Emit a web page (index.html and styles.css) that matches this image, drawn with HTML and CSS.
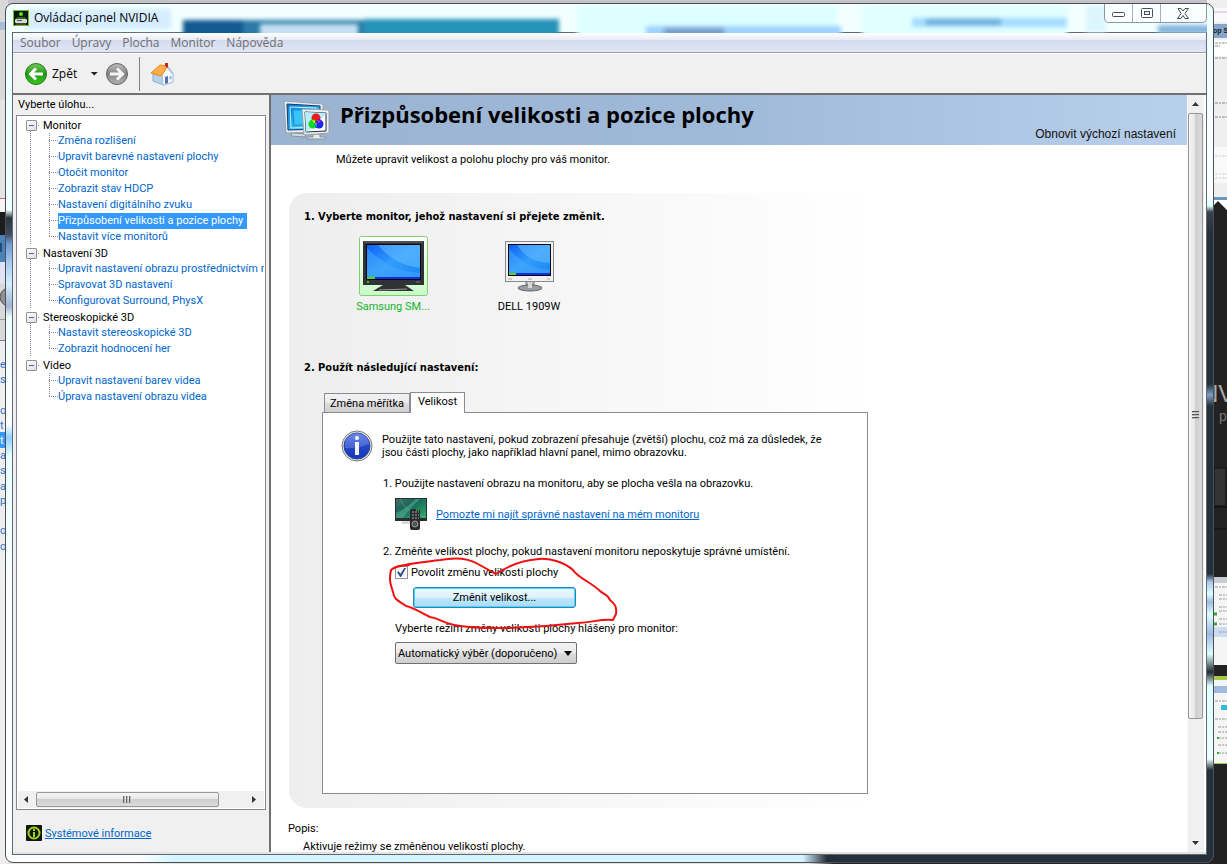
FILE: index.html
```html
<!DOCTYPE html>
<html lang="cs">
<head>
    <meta charset="UTF-8">
    <meta name="viewport" content="width=device-width, initial-scale=1.0">
    <title>Ovládací panel NVIDIA</title>
    <link rel="stylesheet" href="styles.css">
</head>
<body>
    <!-- windows behind -->
    <svg class="backdrop backdrop-left" width="8" height="864" aria-hidden="true">
        <rect width="8" height="864" fill="#d9d9d9"/>
        <rect y="22" width="8" height="8" fill="#a9bdd4"/>
        <rect y="100" width="8" height="98" fill="#e4e4e4"/>
        <rect y="198" width="8" height="1" fill="#d06a6a"/>
        <rect y="199" width="8" height="13" fill="#f4f4f4"/>
        <rect y="212" width="8" height="23" fill="#1c1c1c"/>
        <rect y="235" width="8" height="27" fill="#4a82b8"/>
        <rect y="243" width="2" height="9" fill="#1f4d80"/>
        <rect y="262" width="8" height="22" fill="#e0e4f2"/>
        <circle cx="9" cy="297" r="9" fill="#909090" stroke="#555"/>
        <rect y="319" width="8" height="1" fill="#999"/>
        <rect y="340" width="8" height="1" fill="#777f8a"/>
        <rect y="341" width="8" height="523" fill="#eeeeee"/>
        <rect y="432" width="8" height="16" fill="#3399ff"/>
        <g class="clipped">
            <text x="0" y="368">e</text>
            <text x="0" y="383">s</text>
            <text x="0" y="414">o</text>
            <text x="0" y="429">t</text>
            <text x="0" y="444" class="on">t</text>
            <text x="0" y="459">a</text>
            <text x="0" y="474">s</text>
            <text x="0" y="490">al</text>
            <text x="0" y="504">p</text>
            <text x="0" y="534">o</text>
            <text x="0" y="550">o</text>
        </g>
    </svg>
    <svg class="backdrop backdrop-right" width="20" height="864" aria-hidden="true">
        <rect width="20" height="864" fill="#222"/>
        <rect width="20" height="198" fill="#efefef"/>
        <rect y="8" width="20" height="14" fill="#fafafa"/>
        <rect y="11" width="20" height="2" fill="#e3d8ea"/>
        <rect y="24" width="20" height="14" fill="#86a5c8"/>
        <text x="6" y="33" class="behind-bold">op S</text>
        <rect y="40" width="20" height="16" fill="#fff"/>
        <path d="M8 43h12M8 46h5M8 58h12M8 103h12M8 117h12M8 156h12M8 174h12M8 178h12" stroke="#888" stroke-dasharray="3 1 2 1"/>
        <rect y="147" width="20" height="36" fill="#fff" opacity=".6"/>
        <rect y="197" width="20" height="3" fill="#6a98b8"/>
        <path d="M7 200h13v10l-9-9-4 4z" fill="#fff"/>
        <text x="-6" y="402" class="behind-logo">NV</text>
        <text x="12" y="421" class="behind-sub">p</text>
        <rect x="7" y="468" width="12" height="38" fill="#333" stroke="#111"/>
        <path d="M7 507h13M7 529h13" stroke="#0c0c0c"/>
        <rect y="577" width="20" height="88" fill="#f5f5f5"/>
        <rect y="577" width="20" height="6" fill="#c9ccd2"/>
        <rect y="627" width="20" height="10" fill="#cbdcf2"/>
        <path d="M8 587h12M12 595h8M12 599h8M12 607h8M12 611h8M12 619h8M12 624h8M12 632h8" stroke="#999" stroke-dasharray="3 1 2 1"/>
        <path d="M7 614h3M7 624h3" stroke="#3a3" stroke-width="3"/>
        <rect y="676" width="20" height="88" fill="#f5f5f5"/>
        <rect y="676" width="20" height="4" fill="#a6c84a"/>
        <rect y="686" width="20" height="7" fill="#9dbbe0"/>
        <path d="M14 705h6v5h-6z" fill="#34b8dc"/>
        <path d="M8 701h12M8 719h12M11 727h9M11 732h9M11 738h9M11 745h9M11 753h9" stroke="#999" stroke-dasharray="3 1 2 1"/>
        <path d="M10 738h2M10 753h2" stroke="#3a3" stroke-width="2"/>
        <rect y="763" width="20" height="1" fill="#a6c84a"/>
    </svg>

    <div class="window">
        <header class="title-bar">
            <svg class="glass" width="1200" height="29" aria-hidden="true">
                <g class="blurred">
                    <rect x="14" y="5" width="145" height="20" fill="#d6edff"/>
                    <rect x="171" y="16" width="190" height="22" fill="#2b7ba6"/>
                    <rect x="171" y="16" width="60" height="22" fill="#135a91"/>
                    <rect x="248" y="20" width="98" height="18" fill="#c5e0f3"/>
                    <rect x="352" y="15" width="195" height="23" fill="#2693ba"/>
                    <rect x="565" y="2" width="260" height="40" fill="#ddffff"/>
                    <rect x="634" y="22" width="195" height="20" fill="#9ed3ff"/>
                    <rect x="652" y="24" width="60" height="10" fill="#789fc8"/>
                    <rect x="850" y="2" width="205" height="40" fill="#e0ffff"/>
                    <rect x="900" y="14" width="155" height="9" fill="#a5dcff"/>
                    <rect x="914" y="15" width="75" height="6" fill="#6faddb"/>
                    <rect x="1074" y="2" width="20" height="26" fill="#dcf6ff"/>
                    <rect x="1146" y="21" width="60" height="9" fill="#86b5dc"/>
                </g>
            </svg>
            <svg class="app-icon" width="16" height="16" viewBox="0 0 16 16" aria-hidden="true">
                <rect x=".5" y=".5" width="15" height="15" fill="#101510" stroke="#6cc21a"/>
                <circle cx="8" cy="4" r="2" fill="#5be02a"/>
                <path d="M4 7h8l1 2H3z" fill="#276a17"/>
                <rect x="2" y="9" width="12" height="4" rx="1" fill="#d6d9d4"/>
                <path d="M4 10h5v1H4z" fill="#555"/>
                <path d="M3 14h10" stroke="#777"/>
            </svg>
            <span class="app-title">Ovládací panel NVIDIA</span>
            <div class="caption-buttons">
                <button type="button" aria-label="Minimalizovat">
                    <svg width="13" height="7" viewBox="0 0 13 7"><rect x=".5" y="2.500" width="12" height="4" rx="1" fill="#fff" stroke="#474c5e"/></svg>
                </button>
                <button type="button" aria-label="Maximalizovat">
                    <svg width="12" height="10" viewBox="0 0 12 10"><rect x=".5" y=".5" width="11" height="9" rx="1" fill="#fff" stroke="#474c5e"/><rect x="3.500" y="3.500" width="5" height="3" fill="#dff4ff" stroke="#474c5e"/></svg>
                </button>
                <button type="button" class="close" aria-label="Zavřít">
                    <svg width="13" height="11" viewBox="0 0 13 11"><path d="M1 .5h3l2 2.500 2-2.500h3.500L8 5.500l3.500 5H8l-2-3-2 3H.5L4 5.500z" fill="#fff" stroke="#474c5e"/></svg>
                </button>
            </div>
        </header>

        <div class="client">
            <nav class="menu">
                <a href="#">Soubor</a>
                <a href="#">Úpravy</a>
                <a href="#">Plocha</a>
                <a href="#">Monitor</a>
                <a href="#">Nápověda</a>
            </nav>

            <div class="toolbar">
                <button type="button" class="back">
                    <svg width="24" height="24" viewBox="0 0 24 24" aria-hidden="true">
                        <defs>
                            <linearGradient id="green" x1="0" y1="0" x2="0" y2="1"><stop offset="0" stop-color="#7cc862"/><stop offset=".5" stop-color="#1f9a14"/><stop offset="1" stop-color="#3cc81e"/></linearGradient>
                            <linearGradient id="grey" x1="0" y1="0" x2="0" y2="1"><stop offset="0" stop-color="#bdbdbd"/><stop offset=".5" stop-color="#858585"/><stop offset="1" stop-color="#b4b4b4"/></linearGradient>
                        </defs>
                        <circle cx="12" cy="12" r="10.500" fill="url(#green)" stroke="#167a10"/>
                        <path d="M19 12H7M12 6.500L6.500 12l5.500 5.500" fill="none" stroke="#fff" stroke-width="3"/>
                    </svg>
                    Zpět
                </button>
                <button type="button" class="history" aria-label="Historie"></button>
                <button type="button" aria-label="Vpřed">
                    <svg width="24" height="24" viewBox="0 0 24 24" aria-hidden="true">
                        <circle cx="12" cy="12" r="10.500" fill="url(#grey)" stroke="#606060"/>
                        <path d="M5 12h12M12 6.500l5.500 5.500-5.500 5.500" fill="none" stroke="#f4f4f4" stroke-width="3"/>
                    </svg>
                </button>
                <span class="separator"></span>
                <button type="button" aria-label="Domů">
                    <svg width="24" height="24" viewBox="0 0 24 24" aria-hidden="true">
                        <path d="M3 11l7-4 4 7v9L3 19z" fill="#b4d3f0" stroke="#88acd0"/>
                        <path d="M12 13l5-8 6 7v8l-10 3.500z" fill="#f3f8fd" stroke="#9cbcdc"/>
                        <path d="M15 22v-7l3-1v7z" fill="#5b6fa5"/>
                        <path d="M19.500 14.500l2-.5v3l-2 .5z" fill="#7fb5e8"/>
                        <path d="M1 11l9-8 8 1-7 10z" fill="#ffad48" stroke="#e88a20"/>
                        <path d="M17 4l6 8" stroke="#a9c7e2" stroke-width="2"/>
                        <path d="M15 1h3v5l-3-2z" fill="#c3231c"/>
                    </svg>
                </button>
            </div>

            <div class="content">
                <aside class="sidebar">
                    <h2>Vyberte úlohu...</h2>
                    <div class="tree-box">
                        <ul class="tree">
                            <li><span class="group">Monitor</span>
                                <ul>
                                    <li><a href="#">Změna rozlišení</a></li>
                                    <li><a href="#">Upravit barevné nastavení plochy</a></li>
                                    <li><a href="#">Otočit monitor</a></li>
                                    <li><a href="#">Zobrazit stav HDCP</a></li>
                                    <li><a href="#">Nastavení digitálního zvuku</a></li>
                                    <li><a href="#" class="selected">Přizpůsobení velikosti a pozice plochy</a></li>
                                    <li><a href="#">Nastavit více monitorů</a></li>
                                </ul>
                            </li>
                            <li><span class="group">Nastavení 3D</span>
                                <ul>
                                    <li><a href="#">Upravit nastavení obrazu prostřednictvím n</a></li>
                                    <li><a href="#">Spravovat 3D nastavení</a></li>
                                    <li><a href="#">Konfigurovat Surround, PhysX</a></li>
                                </ul>
                            </li>
                            <li><span class="group">Stereoskopické 3D</span>
                                <ul>
                                    <li><a href="#">Nastavit stereoskopické 3D</a></li>
                                    <li><a href="#">Zobrazit hodnocení her</a></li>
                                </ul>
                            </li>
                            <li><span class="group">Video</span>
                                <ul>
                                    <li><a href="#">Upravit nastavení barev videa</a></li>
                                    <li><a href="#">Úprava nastavení obrazu videa</a></li>
                                </ul>
                            </li>
                        </ul>
                        <div class="scroll-x" aria-hidden="true">
                            <i class="arrow left"></i>
                            <div class="track"><div class="thumb"><i class="grip"></i></div></div>
                            <i class="arrow right"></i>
                        </div>
                    </div>
                    <div class="system-info">
                        <svg width="16" height="16" viewBox="0 0 16 16" aria-hidden="true">
                            <rect width="16" height="16" rx="1" fill="#12160c"/>
                            <circle cx="8" cy="8" r="5.500" fill="none" stroke="#9bd51f" stroke-width="2"/>
                            <path d="M8 4v2M8 7v5" stroke="#9bd51f" stroke-width="2"/>
                        </svg>
                        <a href="#">Systémové informace</a>
                    </div>
                </aside>

                <main class="page">
                    <div class="page-header">
                        <svg width="48" height="40" viewBox="0 0 48 40" aria-hidden="true">
                            <defs>
                                <linearGradient id="cyan" x1="0" y1="0" x2="1" y2="1"><stop offset="0" stop-color="#0a74d8"/><stop offset="1" stop-color="#5fe6ff"/></linearGradient>
                            </defs>
                            <path d="M9 33l13 1 1 3-15-1z" fill="#d5d9dc" stroke="#8b949c"/>
                            <path d="M1 1l39 3v28L3 33z" fill="#e9edf0" stroke="#98a4af"/>
                            <path d="M4 4l33 2v23L5 30z" fill="url(#cyan)" stroke="#0b3d72"/>
                            <path d="M7 7l26 1v19L8 28z" fill="none" stroke="#b7f3ff"/>
                            <path d="M10 10h18v15H11z" fill="#39c5f4" stroke="#0d96d8"/>
                            <path d="M30 34h7v3h5l1 2H24l1-2h5z" fill="#e6e8ea" stroke="#8b949c"/>
                            <path d="M19 9l27 1v23l-25 2z" fill="#eef1f3" stroke="#98a4af"/>
                            <path d="M22 12l21 1v18l-20 1z" fill="#fff" stroke="#222f3b"/>
                            <path d="M22 12l21 1-2 3-14 14-4 2z" fill="#b5efff"/>
                            <circle cx="33" cy="18" r="4.500" fill="#f01818"/>
                            <circle cx="30" cy="24" r="4.500" fill="#12dc22"/>
                            <circle cx="36" cy="24" r="4.500" fill="#1828ee"/>
                            <path d="M29 20l4 1 1 3-3-1z" fill="#ffe818"/>
                            <path d="M34 20l4 1-3 2z" fill="#ea20dc"/>
                            <path d="M33 23l1 4-2-2z" fill="#18e2e8"/>
                            <circle cx="33" cy="22" r="1" fill="#333"/>
                        </svg>
                        <h1>Přizpůsobení velikosti a pozice plochy</h1>
                        <a href="#">Obnovit výchozí nastavení</a>
                    </div>
                    <p class="intro">Můžete upravit velikost a polohu plochy pro váš monitor.</p>

                    <section class="panel">
                        <h2>1. Vyberte monitor, jehož nastavení si přejete změnit.</h2>
                        <div class="monitors">
                            <button type="button" class="monitor active">
                                <svg width="69" height="60" viewBox="0 0 69 60" aria-hidden="true">
                                    <defs>
                                        <linearGradient id="screen" x1="0" y1="0" x2="1" y2="1"><stop offset="0" stop-color="#0d62f5"/><stop offset=".5" stop-color="#319dfc"/><stop offset="1" stop-color="#1c86f4"/></linearGradient>
                                        <linearGradient id="mint" x1="0" y1="0" x2="0" y2="1"><stop offset="0" stop-color="#fff"/><stop offset="1" stop-color="#c9fbc9"/></linearGradient>
                                    </defs>
                                    <rect x=".5" y=".5" width="68" height="59" rx="2" fill="url(#mint)" stroke="#82cf70"/>
                                    <path d="M24 49h22l9 6H14z" fill="#333"/>
                                    <path d="M20 54l28-1" stroke="#999"/>
                                    <rect x="4" y="5" width="61" height="44" fill="#303336"/>
                                    <path d="M5 6h59" stroke="#6b6f73"/>
                                    <rect x="7" y="8" width="55" height="36" fill="#05070c"/>
                                    <rect x="8" y="9" width="53" height="32" fill="url(#screen)"/>
                                    <path d="M19 9h42v23Q35 29 19 9z" fill="#68bdff" opacity=".55"/>
                                    <path d="M8 12Q30 35 61 37v4H8z" fill="#49a9fb" opacity=".5"/>
                                    <path d="M8 42h53" stroke="#152de0" stroke-width="2"/>
                                    <path d="M8 42h8" stroke="#5fd11b" stroke-width="2"/>
                                    <path d="M8 46h2" stroke="#20c028" stroke-width="2"/>
                                    <path d="M57 46h4" stroke="#777"/>
                                </svg>
                                Samsung SM...
                            </button>
                            <button type="button" class="monitor">
                                <svg width="69" height="60" viewBox="0 0 69 60" aria-hidden="true">
                                    <path d="M31 45h8v4h-8z" fill="#b8bbbd" stroke="#777"/>
                                    <ellipse cx="35" cy="52" rx="12" ry="3" fill="#9a9ea1" stroke="#606468"/>
                                    <path d="M33 45h4v7h-4z" fill="#d8d8d8"/>
                                    <rect x="10.500" y="5.500" width="48" height="40" fill="#f1f1f1" stroke="#8a8a8a"/>
                                    <rect x="13" y="8" width="43" height="32" fill="#05070c"/>
                                    <rect x="14" y="9" width="41" height="28" fill="url(#screen)"/>
                                    <path d="M22 9h33v18Q32 26 22 9z" fill="#68bdff" opacity=".55"/>
                                    <path d="M14 13Q30 32 55 34v3H14z" fill="#49a9fb" opacity=".5"/>
                                    <path d="M14 38h41" stroke="#152de0" stroke-width="2"/>
                                    <path d="M14 38h7" stroke="#5fd11b" stroke-width="2"/>
                                    <path d="M13 43h4M33 43h4M52 43h3" stroke="#aaa"/>
                                </svg>
                                DELL 1909W
                            </button>
                        </div>

                        <h2>2. Použít následující nastavení:</h2>
                        <div class="tabs" role="tablist">
                            <button type="button" role="tab">Změna měřítka</button>
                            <button type="button" role="tab" class="current" aria-selected="true">Velikost</button>
                        </div>
                        <div class="tab-page" role="tabpanel">
                            <div class="info">
                                <svg width="32" height="34" viewBox="0 0 32 34" aria-hidden="true">
                                    <defs>
                                        <linearGradient id="blue" x1="0" y1="0" x2="0" y2="1"><stop offset="0" stop-color="#5b7be4"/><stop offset=".5" stop-color="#2547c4"/><stop offset="1" stop-color="#1338b4"/></linearGradient>
                                    </defs>
                                    <circle cx="16" cy="16" r="15" fill="#e4e4e4" stroke="#777"/>
                                    <circle cx="16" cy="16" r="13" fill="url(#blue)" stroke="#2443a5"/>
                                    <path d="M4 14a12 11 0 0 1 24 0q-12 5-24 4z" fill="#8ba4f4" opacity=".35"/>
                                    <circle cx="16" cy="8" r="2" fill="#fff"/>
                                    <path d="M14 12h4v13h-4z" fill="#f4f4f4"/>
                                </svg>
                                <p>Použijte tato nastavení, pokud zobrazení přesahuje (zvětší) plochu, což má za důsledek, že jsou části plochy, jako například hlavní panel, mimo obrazovku.</p>
                            </div>
                            <p class="step">1. Použijte nastavení obrazu na monitoru, aby se plocha vešla na obrazovku.</p>
                            <div class="help">
                                <svg width="32" height="33" viewBox="0 0 32 33" aria-hidden="true">
                                    <defs>
                                        <linearGradient id="teal" x1="0" y1="0" x2="1" y2="1"><stop offset="0" stop-color="#4a6b68"/><stop offset=".4" stop-color="#14695b"/><stop offset="1" stop-color="#2fae68"/></linearGradient>
                                    </defs>
                                    <path d="M8 22h14l3 4H6z" fill="#ddd"/>
                                    <rect width="32" height="23" fill="#2a2e30"/>
                                    <rect x="1" y="1" width="30" height="19" fill="url(#teal)"/>
                                    <path d="M1 15Q12 10 21 1h4Q13 12 8 20H1z" fill="#7cc7ae" opacity=".4"/>
                                    <path d="M5 1q7 15 25 18" fill="none" stroke="#67bd9d" opacity=".5"/>
                                    <rect x="15" y="11" width="10" height="21" rx="2" fill="#292b2e"/>
                                    <path d="M17 14h7M17 17h7M17 20h7" stroke="#aaa" stroke-dasharray="2 1"/>
                                    <circle cx="20" cy="26" r="3" fill="#555" stroke="#999"/>
                                    <path d="M21 12h3" stroke="#37e030"/>
                                </svg>
                                <a href="#">Pomozte mi najít správné nastavení na mém monitoru</a>
                            </div>
                            <p class="step">2. Změňte velikost plochy, pokud nastavení monitoru neposkytuje správné umístění.</p>
                            <div class="resize">
                                <label class="check"><input type="checkbox" checked>Povolit změnu velikosti plochy</label>
                                <button type="button" class="resize-button">Změnit velikost...</button>
                                <label for="mode">Vyberte režim změny velikosti plochy hlášený pro monitor:</label>
                                <div class="select-box">
                                    <select id="mode">
                                        <option>Automatický výběr (doporučeno)</option>
                                    </select>
                                </div>
                                <!-- red pen mark -->
                                <svg class="pen" width="230" height="76" viewBox="0 0 230 76" aria-hidden="true">
                                    <path d="M6 11C18 6 38 5 52 3C68 0 80 1 90 7L108 17C120 9 135 3 151 2C164 1 177 6 185 13C190 21 203 25 212 34C216 38 219 36 222 43C227 47 229 50 228 57L225 63C211 62 207 65 190 66C155 70 95 74 66 68C54 66 51 61 42 60C33 56 27 51 18 49C11 44 6 43 5 35C2 26 1 22 3 13C6 10 14 8 22 8"/>
                                </svg>
                            </div>
                        </div>
                    </section>

                    <section class="description">
                        <h3>Popis:</h3>
                        <p>Aktivuje režimy se změněnou velikostí plochy.</p>
                    </section>
                </main>

                <div class="scroll-y" aria-hidden="true">
                    <i class="arrow up"></i>
                    <div class="track"><div class="thumb"><i class="grip"></i></div></div>
                    <i class="arrow down"></i>
                </div>
            </div>
        </div>
    </div>
</body>
</html>
```

FILE: styles.css
```css
* { box-sizing: border-box; }
body { margin: 0; height: 100vh; display: flex; padding: 3px 13px 1px 5px; overflow: hidden; position: relative; background: linear-gradient(90deg, #e4e4e4 66%, #222 68%); font-family: Roboto, "Noto Sans", sans-serif; font-size: 11px; line-height: 13px; color: #000; }
body::before { content: ""; position: absolute; left: 0; right: 0; top: 0; height: 12px; background: #c3c3c9; }
h1, h2, h3, p, ul { margin: 0; padding: 0; font-size: 11px; }
ul { list-style: none; }
svg { display: block; flex: none; }
a { color: #0066cc; }
button { font: inherit; color: inherit; background: none; border: 0; padding: 0; margin: 0; }

/* things behind the window */
.backdrop { position: absolute; top: 0; overflow: visible; }
.backdrop-left { left: 0; }
.backdrop-right { right: 0; }
.clipped { font-size: 11px; fill: #2a78cc; }
.clipped .on { fill: #fff; }
.behind-bold { font: bold 7px "Liberation Sans", sans-serif; fill: #122; }
.behind-logo { font: 24px "Liberation Sans", sans-serif; fill: #aaa; }
.behind-sub { font: 14px "Liberation Sans", sans-serif; fill: #777; }

.window { position: relative; flex: 1; min-width: 0; display: flex; flex-direction: column; padding: 0 6px 7px; border: 1px solid #4b5056; border-radius: 8px; overflow: hidden;
    background:
        linear-gradient(90deg, #fff 11%, #d4f5ff 14%, #d4f5ff 66%, #26303a 68%) left bottom / 100% 7px no-repeat,
        linear-gradient(180deg, #f0ffff 0, #fff 190px, #e0fdff 202px, #3a434c 208px, #26303a 230px, #26303a 380px, #7f9fc0 391px, #26303a 402px, #26303a 570px, #a9c8ee 578px, #dfffff 590px, #9dbbe0 598px, #dfffff 610px, #9dbbe0 630px, #dfffff 650px, #222a30 668px, #dfffff 682px, #efffff 755px, #26303a 766px) right top / 7px 100% no-repeat,
        linear-gradient(180deg, #f0ffff 0, #f0ffff 206px, #2d343c 214px, #3d4b5e 230px, #6d9cd4 240px, #a9cdf2 260px, #d4efff 280px, #9fb4d0 302px, #efffff 314px, #fff 420px, #8fd0ff 434px, #e8ffff 452px, #fff 600px) left top / 7px 100% no-repeat,
        #f2ffff; }

.title-bar { height: 28px; flex: none; display: flex; align-items: flex-start; position: relative; font: 12px/18px "Open Sans", sans-serif; }
.glass { position: absolute; left: 0; top: 0; width: 100%; }
.blurred { filter: blur(2px); }
.app-icon, .app-title, .caption-buttons { position: relative; }
.app-icon { margin: 6px 5px 0 1px; }
.app-title { margin-top: 5px; }
.caption-buttons { margin-left: auto; display: flex; height: 19px; border: 1px solid #8c979f; border-top: 0; border-radius: 0 0 5px 5px; background: rgba(255, 255, 255, .5); }
.caption-buttons button { width: 28px; display: flex; align-items: center; justify-content: center; border-right: 1px solid #a5b0b7; }
.caption-buttons .close { width: 45px; border-right: 0; }

.client { flex: 1; min-height: 0; display: flex; flex-direction: column; border: 1px solid #5d6a76; background: #f0f0f0; }
.menu { height: 20px; flex: none; display: flex; gap: 11px; padding-left: 7px; font: 12px/20px "Open Sans", sans-serif; background: linear-gradient(180deg, #fff 0, #e8ebf6 7px, #d5dbef 7px, #e1e6f6 100%); border-bottom: 1px solid #a0a0a0; }
.menu a { color: #6d6d6d; text-decoration: none; }
.toolbar { height: 42px; flex: none; display: flex; align-items: center; padding-left: 11px; border-top: 1px solid #fff; border-bottom: 2px solid #707070; }
.toolbar .back { display: flex; align-items: center; gap: 4px; font: 12px/16px "Open Sans", sans-serif; }
.history { width: 8px; height: 4px; margin: 0 7px 0 13px; background: #222; clip-path: polygon(0 0, 100% 0, 50% 100%); }
.separator { width: 1px; height: 34px; background: #808080; margin: 0 10px; }

.content { flex: 1; min-height: 0; display: flex; border-bottom: 2px solid #e3e3e3; }
.sidebar { width: 258px; flex: none; display: flex; flex-direction: column; padding: 3px 3px 0 3px; border-right: 2px solid #707070; }
.sidebar h2 { font-weight: normal; padding: 0 0 4px 2px; }
.tree-box { flex: 1; min-height: 0; display: flex; flex-direction: column; border: 1px solid #828790; background: #fff; overflow: hidden; padding: 1px 1px 1px 0; }
.tree { flex: 1; padding-left: 9px; white-space: nowrap; overflow: hidden; }
.tree > li { background: repeating-linear-gradient(180deg, #888 0 1px, transparent 1px 2px) 4px 8px / 1px 100% no-repeat; }
.tree > li:last-child { background: none; }
.group { display: flex; align-items: center; height: 16px; background: repeating-linear-gradient(90deg, #888 0 1px, transparent 1px 2px) 10px 8px / 4px 1px no-repeat; }
.group::before { content: ""; width: 9px; height: 9px; margin-right: 6px; border: 1px solid #919191; border-radius: 1px; background: linear-gradient(#4b63a7, #4b63a7) center / 5px 1px no-repeat, linear-gradient(135deg, #fff, #ddd); }
.tree ul { padding-left: 23px; }
.tree ul li { height: 16px; display: flex; align-items: flex-start; background: repeating-linear-gradient(180deg, #888 0 1px, transparent 1px 2px) left top / 1px 100% no-repeat, repeating-linear-gradient(90deg, #888 0 1px, transparent 1px 2px) left 7px / 9px 1px no-repeat; }
.tree ul li:last-child { background-size: 1px 8px, 9px 1px; }
.tree ul a { line-height: 15px; height: 16px; margin-left: 9px; text-decoration: none; }
.tree ul .selected { background: #3399ff; color: #fff; padding-right: 4px; }
.system-info { height: 42px; flex: none; display: flex; align-items: center; gap: 3px; padding: 4px 0 0 10px; }

/* scrollbars */
.scroll-x { height: 17px; flex: none; display: flex; align-items: center; background: #f0f0f0; margin-left: 1px; }
.scroll-x .track { flex: 1; }
.scroll-x .thumb { width: 87%; height: 15px; display: flex; align-items: center; justify-content: center; border: 1px solid #979797; border-radius: 2px; background: linear-gradient(180deg, #f5f5f5 0, #e6e6e6 50%, #cfcfcf 50%, #dadada 100%); }
.scroll-x .grip { width: 8px; height: 7px; background: repeating-linear-gradient(90deg, #666 0 1px, #bbb 1px 2px, transparent 2px 3px); }
.scroll-y { width: 19px; flex: none; display: flex; flex-direction: column; align-items: center; padding-right: 3px; border-left: 1px solid #f8f8f8; background: linear-gradient(90deg, #f0f0f0 16px, #fff 16px); }
.scroll-y .track { flex: 1; width: 15px; }
.scroll-y .thumb { height: 84%; display: flex; align-items: center; justify-content: center; border: 1px solid #979797; border-radius: 2px; background: linear-gradient(90deg, #f5f5f5 0, #e6e6e6 50%, #cfcfcf 50%, #dadada 100%); }
.scroll-y .grip { width: 7px; height: 9px; background: repeating-linear-gradient(180deg, #555 0 1px, #bbb 1px 2px, transparent 2px 3px); }
.arrow { flex: none; background: #333; }
.arrow.left { width: 4px; height: 7px; margin: 0 8px 0 6px; clip-path: polygon(100% 0, 100% 100%, 0 50%); }
.arrow.right { width: 4px; height: 7px; margin: 0 8px 0 6px; clip-path: polygon(0 0, 100% 50%, 0 100%); }
.arrow.up { width: 7px; height: 4px; margin: 7px 0; clip-path: polygon(50% 0, 100% 100%, 0 100%); }
.arrow.down { width: 7px; height: 4px; margin: 7px 0; clip-path: polygon(0 0, 100% 0, 50% 100%); }

.page { flex: 1; min-width: 0; overflow: hidden; background: #fff; }
.page-header { height: 50px; display: flex; align-items: center; padding: 0 11px 0 12px; background: linear-gradient(90deg, #9ab3d1 0, #9fb9d8 50%, #b9d0ec 100%); }
.page-header h1 { margin: 0 auto 12px 9px; font: bold 22px/32px "Open Sans", sans-serif; white-space: nowrap; }
.page-header a { align-self: flex-end; padding-bottom: 3px; color: #111; text-decoration: none; font: 12px/16px "Liberation Sans", sans-serif; }
.intro { padding: 8px 0 0 65px; }
.panel { margin: 27px 16px 0 18px; padding: 17px 0 14px 15px; border-radius: 18px; background: linear-gradient(90deg, #eee 0, #fff 66%); }
.panel h2 { font-family: "DejaVu Sans Condensed", "DejaVu Sans", sans-serif; line-height: 14px; }
.monitors { display: flex; gap: 58px; padding: 12px 0 48px 50px; }
.monitor { width: 78px; display: flex; flex-direction: column; align-items: center; gap: 4px; white-space: nowrap; }
.monitor.active { color: #11b52b; }
.tabs { display: flex; align-items: flex-end; padding: 17px 0 0 20px; }
.tabs button { height: 19px; padding: 0 5px; border: 1px solid #898c95; border-bottom: 0; background: linear-gradient(180deg, #f2f2f2 0, #ebebeb 50%, #ddd 50%, #cfcfcf 100%); }
.tabs .current { height: 21px; padding: 0 7px 3px; margin-bottom: -1px; background: #fff; position: relative; }
.tab-page { margin-left: 18px; max-width: 546px; min-height: 382px; padding: 17px 40px 17px 18px; border: 1px solid #898c95; background: #fff; }
.info { display: flex; gap: 9px; }
.info p { padding-top: 3px; }
.step { padding-left: 42px; margin-top: 13px; line-height: 14px; }
.help { display: flex; align-items: center; gap: 9px; padding: 7px 0 0 54px; }
.help + .step { margin-top: 14px; }
.resize { position: relative; display: flex; flex-direction: column; align-items: flex-start; padding: 7px 0 0 54px; }
.check { display: flex; align-items: center; gap: 3px; }
.check input { appearance: none; margin: 0; width: 13px; height: 13px; border: 1px solid #8e8f8f; background: #f4f4f4; outline: 1px solid #fff; outline-offset: -2px; display: grid; place-items: center; }
.check input:checked::after { content: ""; width: 9px; height: 9px; background: #324d93; clip-path: polygon(0 45%, 20% 40%, 40% 65%, 80% 0, 100% 0, 45% 100%, 35% 100%); }
.resize-button { width: 163px; height: 21px; margin: 8px 0 14px 18px; border: 1px solid #2f83b4; border-radius: 3px; box-shadow: inset 0 0 0 1px #48d4fc; background: linear-gradient(180deg, #eef8fd 0, #dcf1fc 50%, #bfe6fb 50%, #a9dcf6 100%); }
.select-box { position: relative; margin-top: 7px; }
.select-box select { appearance: none; width: 182px; height: 22px; padding: 0 16px 0 2px; border: 1px solid #707070; border-radius: 2px; font: inherit; color: #000; background: linear-gradient(180deg, #f2f2f2 0, #ebebeb 50%, #ddd 50%, #cfcfcf 100%); }
.select-box::after { content: ""; position: absolute; right: 5px; top: 9px; width: 8px; height: 5px; background: #000; clip-path: polygon(0 0, 100% 0, 50% 100%); pointer-events: none; }
.pen { position: absolute; left: 47px; top: -2px; overflow: visible; fill: none; stroke: #f01010; stroke-width: 2; pointer-events: none; }
.description { padding: 14px 0 0 17px; }
.description h3 { font-weight: normal; }
.description p { padding: 5px 0 0 15px; }
```
